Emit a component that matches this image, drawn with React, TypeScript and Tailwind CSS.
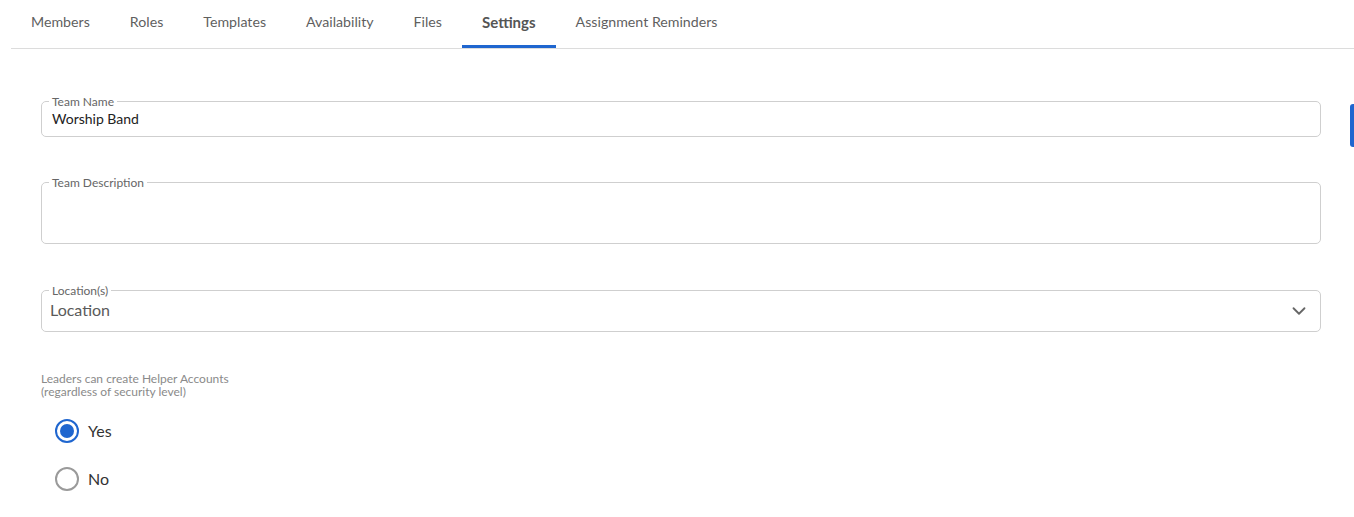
import { ChevronDown } from "lucide-react";

const tabs = ["Members", "Roles", "Templates", "Availability", "Files", "Settings", "Assignment Reminders"];

function Field({ label, children }: { label: string; children: React.ReactNode }) {
  return (
    <fieldset className="rounded-[5px] border border-[#cfcfcf] px-[10px] pb-0 m-0">
      <legend className="ml-[-3px] px-[3px] text-[12px] leading-[13px] text-[#666]">{label}</legend>
      {children}
    </fieldset>
  );
}

export default function App() {
  return (
    <div className="relative min-h-screen bg-white font-['Lato','Liberation_Sans',sans-serif] text-[#333]">
      {/* tabs */}
      <div className="ml-[11px] flex border-b border-[#dcdcdc]">
        {tabs.map((t) => (
          <div
            key={t}
            className={
              t === "Settings"
                ? "h-12 px-5 pt-[13px] text-[15px] leading-[18px] font-bold text-[#555] border-b-[3px] border-[#1f66cf]"
                : "h-12 px-5 pt-[13px] text-[14.2px] leading-[18px] text-[#5f5f5f]"
            }
          >
            {t}
          </div>
        ))}
      </div>

      {/* form */}
      <div className="pl-[41px] pr-[33px] pt-[46px]">
        <Field label="Team Name">
          <div className="h-[28px] pt-[1px] text-[14px] leading-[20px] text-[#222]">Worship Band</div>
        </Field>

        <div className="mt-[39px]">
          <Field label="Team Description">
            <div className="h-[54px]" />
          </Field>
        </div>

        <div className="mt-[40px]">
          <Field label="Location(s)">
            <div className="flex h-[34px] items-start justify-between">
              <span className="-ml-[2px] pt-[3px] text-[16px] leading-[20px] text-[#5a5a5a]">Location</span>
              <ChevronDown className="mt-[3px] h-[22px] w-[22px] text-[#666]" strokeWidth={2} />
            </div>
          </Field>
        </div>

        <div className="mt-[40px] text-[12px] leading-[13px] text-[#8a8a8a]">
          <div>Leaders can create Helper Accounts</div>
          <div>(regardless of security level)</div>
        </div>

        <div className="mt-[21px] ml-[14px] flex flex-col gap-[24px]">
          <label className="flex items-center gap-[9px]">
            <span className="flex h-6 w-6 items-center justify-center rounded-full border-2 border-[#1f66cf]">
              <span className="h-[14px] w-[14px] rounded-full bg-[#1f66cf]" />
            </span>
            <span className="text-[16px] leading-[20px] text-[#333]">Yes</span>
          </label>
          <label className="flex items-center gap-[9px]">
            <span className="h-6 w-6 rounded-full border-2 border-[#9a9a9a]" />
            <span className="text-[16px] leading-[20px] text-[#333]">No</span>
          </label>
        </div>
      </div>

      {/* floating side tab */}
      <div className="absolute right-0 top-[104px] h-[43px] w-[4px] rounded-l-[3px] bg-[#1f66cf]" />
    </div>
  );
}
